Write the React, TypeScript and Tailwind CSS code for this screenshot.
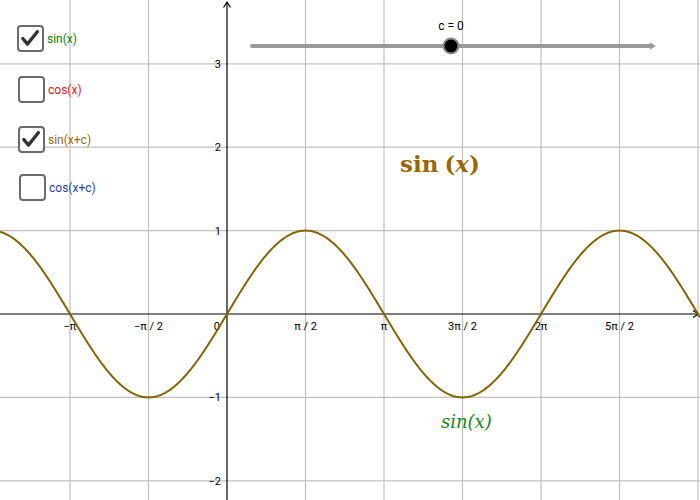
import React from "react";

const OX = 227;
const OY = 314;
const SX = 157 / Math.PI; // px per unit x
const SY = 83.4; // px per unit y

function curvePath() {
  const pts: string[] = [];
  for (let px = 0; px <= 700; px += 1) {
    const x = (px - OX) / SX;
    const py = OY - SY * Math.sin(x);
    pts.push(`${px === 0 ? "M" : "L"}${px.toFixed(1)},${py.toFixed(2)}`);
  }
  return pts.join(" ");
}

const vGrid = [-2, -1, 1, 2, 3, 4, 5, 6].map((k) => OX + k * 78.5);
const hGrid = [3, 2, 1, -1, -2].map((k) => OY - k * SY);

const xLabels: [number, string][] = [
  [-2, "−π"],
  [-1, "−π / 2"],
  [1, "π / 2"],
  [2, "π"],
  [3, "3π / 2"],
  [4, "2π"],
  [5, "5π / 2"],
];
const yLabels: [number, string][] = [
  [3, "3"],
  [2, "2"],
  [1, "1"],
  [-1, "−1"],
  [-2, "−2"],
];

function Box({ checked }: { checked: boolean }) {
  return (
    <div className="w-[27px] h-[27px] rounded-[4px] border-2 border-[#6b6b6b] bg-white flex items-center justify-center shrink-0">
      {checked && (
        <svg width="27" height="27" viewBox="0 0 27 27" className="block">
          <path d="M4.5 13.5 L10 20 L21.5 5.5" fill="none" stroke="#333" strokeWidth="4" strokeLinecap="round" strokeLinejoin="round" />
        </svg>
      )}
    </div>
  );
}

function CheckRow({ checked, label, color, top, left }: { checked: boolean; label: string; color: string; top: string; left: string }) {
  return (
    <div className={`absolute flex items-center gap-[3px] ${top} ${left}`}>
      <Box checked={checked} />
      <span className={`text-[12px] leading-none ${color}`} style={{ fontFamily: "Roboto, 'Noto Sans', sans-serif" }}>
        {label}
      </span>
    </div>
  );
}

export default function App() {
  return (
    <div className="relative w-[700px] h-[500px] bg-white overflow-hidden" style={{ fontFamily: "Roboto, 'Liberation Sans', sans-serif" }}>
      <svg width="700" height="500" className="absolute inset-0 block">
        {vGrid.map((x) => (
          <line key={"v" + x} x1={x} y1={0} x2={x} y2={500} stroke="#c0c0c0" strokeWidth="1.2" />
        ))}
        {hGrid.map((y) => (
          <line key={"h" + y} x1={0} y1={y} x2={700} y2={y} stroke="#c0c0c0" strokeWidth="1.2" />
        ))}
        {/* axes */}
        <line x1={0} y1={OY} x2={698} y2={OY} stroke="#000" strokeWidth="1.2" />
        <path d="M693 310.5 L698.5 314 L693 317.5" fill="none" stroke="#000" strokeWidth="1.2" />
        <line x1={OX} y1={2} x2={OX} y2={500} stroke="#000" strokeWidth="1.2" />
        <path d="M223.5 7.5 L227 2 L230.5 7.5" fill="none" stroke="#000" strokeWidth="1.2" />
        {/* tick labels */}
        {xLabels.map(([k, t]) => (
          <text key={t} x={OX + k * 78.5} y={330} fontSize="11" textAnchor="middle" fill="#000" fontFamily="Roboto, 'Liberation Sans', sans-serif">
            {t}
          </text>
        ))}
        <text x={220} y={330} fontSize="11" textAnchor="end" fill="#000" fontFamily="Roboto, 'Liberation Sans', sans-serif">0</text>
        {yLabels.map(([k, t]) => (
          <text key={t} x={221} y={OY - k * SY + 4} fontSize="11" textAnchor="end" fill="#000" fontFamily="Roboto, 'Liberation Sans', sans-serif">
            {t}
          </text>
        ))}
        {/* curve */}
        <path d={curvePath()} fill="none" stroke="#866400" strokeWidth="2" />
        {/* slider */}
        <line x1={252} y1={46} x2={651} y2={46} stroke="#999" strokeWidth="4" strokeLinecap="round" />
        <path d="M650 42.5 L656 46 L650 49.5 Z" fill="#999" />
        <circle cx={451} cy={46} r={8.5} fill="#8a8a8a" />
        <circle cx={451} cy={46} r={6.5} fill="#000" />
        <text x={451} y={30} fontSize="12" textAnchor="middle" fill="#000" fontFamily="Roboto, 'Liberation Sans', sans-serif">c = 0</text>
      </svg>

      <CheckRow checked label="sin(x)" color="text-[#0a7f0a]" top="top-[25px]" left="left-[17px]" />
      <CheckRow checked={false} label="cos(x)" color="text-[#e0191f]" top="top-[76px]" left="left-[18px]" />
      <CheckRow checked label="sin(x+c)" color="text-[#9a6b10]" top="top-[126px]" left="left-[18px]" />
      <CheckRow checked={false} label="cos(x+c)" color="text-[#1f45a5]" top="top-[174px]" left="left-[19px]" />

      <div className="absolute left-[400px] top-[152px] text-[23px] leading-none font-bold text-[#9a6700] whitespace-nowrap" style={{ fontFamily: "'DejaVu Serif', 'Liberation Serif', serif" }}>
        sin<span className="ml-[6px]">(</span><i>x</i>)
      </div>
      <div className="absolute left-[441px] top-[413px] text-[18px] leading-none italic text-[#138a13] whitespace-nowrap" style={{ fontFamily: "'DejaVu Serif', 'Liberation Serif', serif" }}>
        sin(x)
      </div>
    </div>
  );
}
